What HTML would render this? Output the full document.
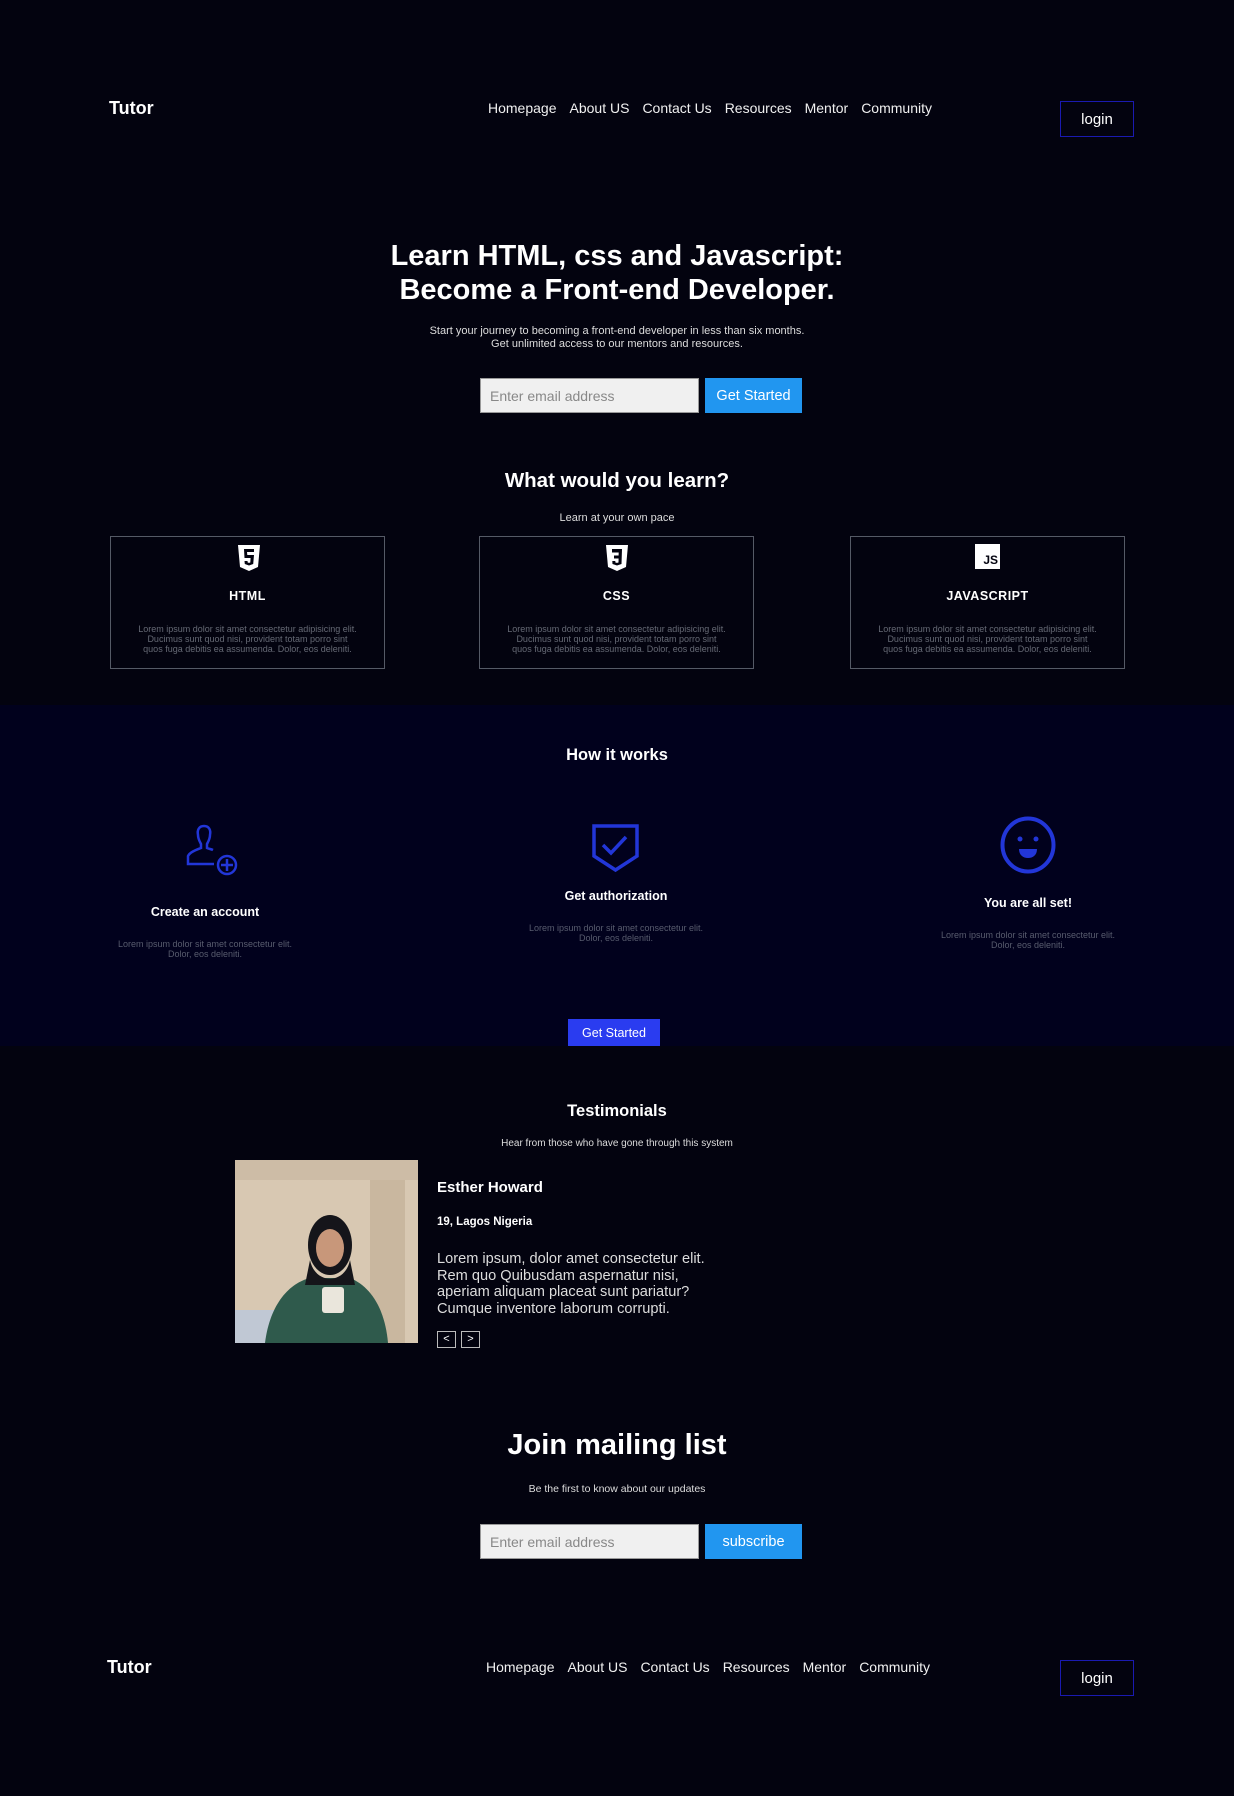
<!DOCTYPE html>
<html><head><meta charset="utf-8"><style>
*{margin:0;padding:0;box-sizing:border-box}
body{width:1234px;height:1796px;background:#03030f;font-family:"Liberation Sans",sans-serif;color:#fff;position:relative;overflow:hidden}
.a{position:absolute}
.c{position:absolute;left:0;width:1234px;text-align:center}
.nav{display:flex;gap:13px;font-size:14px;color:#f0f0f0}
.login{border:1px solid #1a1ab0;width:74px;height:36px;font-size:15px;display:flex;align-items:center;justify-content:center}
.inp{background:#f0f0f0;border:1px solid #999;color:#888;font-size:14px;padding-left:9px;display:flex;align-items:center}
.btn{background:#2196f0;color:#fff;font-size:14.5px;display:flex;align-items:center;justify-content:center}
.card{border:1px solid #555a66;width:275px;height:133px;top:536px;text-align:center}
.card h4{position:absolute;top:52px;width:100%;font-size:12.5px;letter-spacing:.5px}
.card p{position:absolute;top:87px;width:100%;font-size:9px;line-height:10px;color:#666a75}
.step{position:absolute;width:300px;text-align:center}
.step h4{font-size:12.5px}
.step p{font-size:9px;line-height:10px;color:#585c6e}
</style></head><body>
<div class="a" style="left:109px;top:98px;font-size:18px;font-weight:bold">Tutor</div>
<div class="a nav" style="left:488px;top:100px">Homepage<span>About US</span><span>Contact Us</span><span>Resources</span><span>Mentor</span><span>Community</span></div>
<div class="a login" style="left:1060px;top:101px">login</div>

<div class="c" style="top:239px;font-size:29px;font-weight:bold;line-height:34px">Learn HTML, css and Javascript:<br>Become a Front-end Developer.</div>
<div class="c" style="top:325px;font-size:11px;line-height:13px;color:#ddd">Start your journey to becoming a front-end developer in less than six months.<br>Get unlimited access to our mentors and resources.</div>
<div class="a inp" style="left:480px;top:378px;width:219px;height:35px">Enter email address</div>
<div class="a btn" style="left:705px;top:378px;width:97px;height:35px">Get Started</div>

<div class="c" style="top:469px;font-size:20.5px;font-weight:bold">What would you learn?</div>
<div class="c" style="top:512px;font-size:11px;color:#ddd">Learn at your own pace</div>

<div class="a card" style="left:110px"><svg class="a" style="left:127px;top:8px" width="22" height="26" viewBox="0 0 22 26"><path d="M0 0h22l-2 22-9 4-9-4z" fill="#fff"/><path d="M6 4h10v3H9l.3 3H16l-.8 9-4.2 1.5L6.8 19l-.3-3h3l.2 1.5 1.3.4 1.3-.4.3-4.5H6.5z" fill="#03030f"/></svg><h4>HTML</h4><p>Lorem ipsum dolor sit amet consectetur adipisicing elit.<br>Ducimus sunt quod nisi, provident totam porro sint<br>quos fuga debitis ea assumenda. Dolor, eos deleniti.</p></div>
<div class="a card" style="left:479px"><svg class="a" style="left:126px;top:8px" width="22" height="26" viewBox="0 0 22 26"><path d="M0 0h22l-2 22-9 4-9-4z" fill="#fff"/><path d="M6 4h10l-.5 15-4.5 1.5L6.5 19l-.2-3h3l.1 1.5 1.6.4 1.5-.4.1-4H8v-3h4.6l.1-3H6z" fill="#03030f"/></svg><h4>CSS</h4><p>Lorem ipsum dolor sit amet consectetur adipisicing elit.<br>Ducimus sunt quod nisi, provident totam porro sint<br>quos fuga debitis ea assumenda. Dolor, eos deleniti.</p></div>
<div class="a card" style="left:850px"><div class="a" style="left:124px;top:7px;width:25px;height:25px;background:#fff;color:#03030f;font-size:12px;font-weight:bold;text-align:right;padding:9px 2px 0 0;line-height:14px">JS</div><h4>JAVASCRIPT</h4><p>Lorem ipsum dolor sit amet consectetur adipisicing elit.<br>Ducimus sunt quod nisi, provident totam porro sint<br>quos fuga debitis ea assumenda. Dolor, eos deleniti.</p></div>

<div class="a" style="left:0;top:705px;width:1234px;height:341px;background:#01011d"></div>
<div class="c" style="top:746px;font-size:16.5px;font-weight:bold">How it works</div>
<svg class="a" style="left:186px;top:824px" width="54" height="54" viewBox="0 0 54 54" fill="none" stroke="#2236d8" stroke-width="2.5"><path d="M18 2c-5 0-7 4-6 9 0 4 2 7 3 9v4c-5 2-11 4-13 8v8h26"/><path d="M18 2c5 0 7 4 6 9 0 4-2 7-3 9v4c2 1 4 1 6 2"/><circle cx="41" cy="41" r="9"/><path d="M41 35v12M35 41h12"/></svg>
<svg class="a" style="left:591px;top:823px" width="49" height="50" viewBox="0 0 49 50" fill="none" stroke="#2236d8" stroke-width="3.5"><path d="M3 3h43v30L24.5 47 3 33z"/><path d="M12 22l8 8 15-16"/></svg>
<svg class="a" style="left:1000px;top:816px" width="56" height="58" viewBox="0 0 56 58"><ellipse cx="28" cy="29" rx="25.5" ry="26.5" fill="none" stroke="#2236d8" stroke-width="4"/><circle cx="20" cy="23" r="2.5" fill="#2236d8"/><circle cx="36" cy="23" r="2.5" fill="#2236d8"/><path d="M19 33h18c0 6-4 9-9 9s-9-3-9-9z" fill="#2236d8"/></svg>
<div class="step" style="left:55px;top:905px"><h4>Create an account</h4><p style="margin-top:20px">Lorem ipsum dolor sit amet consectetur elit.<br>Dolor, eos deleniti.</p></div>
<div class="step" style="left:466px;top:889px"><h4>Get authorization</h4><p style="margin-top:20px">Lorem ipsum dolor sit amet consectetur elit.<br>Dolor, eos deleniti.</p></div>
<div class="step" style="left:878px;top:896px"><h4>You are all set!</h4><p style="margin-top:20px">Lorem ipsum dolor sit amet consectetur elit.<br>Dolor, eos deleniti.</p></div>
<div class="a" style="left:568px;top:1019px;width:92px;height:27px;background:#2a3cf0;font-size:12.5px;display:flex;align-items:center;justify-content:center">Get Started</div>

<div class="c" style="top:1102px;font-size:16.5px;font-weight:bold">Testimonials</div>
<div class="c" style="top:1138px;font-size:10px;color:#ddd">Hear from those who have gone through this system</div>
<svg class="a" style="left:235px;top:1160px" width="183" height="183" viewBox="0 0 183 183"><rect width="183" height="183" fill="#d8c8b2"/><rect x="0" y="0" width="183" height="20" fill="#cdbca6"/><rect x="135" y="20" width="35" height="163" fill="#c9b79f"/><rect x="0" y="150" width="40" height="33" fill="#c0c8d4"/><path d="M30 183c5-40 25-60 45-65h40c20 8 35 30 38 65z" fill="#2f5a4c"/><ellipse cx="95" cy="85" rx="22" ry="30" fill="#15151a"/><ellipse cx="95" cy="88" rx="14" ry="19" fill="#c8977a"/><path d="M75 100c5 25 35 25 40 0l5 25H70z" fill="#15151a"/><rect x="87" y="127" width="22" height="26" rx="3" fill="#eae6dc"/></svg>
<div class="a" style="left:437px;top:1179px;font-size:15px;font-weight:bold">Esther Howard</div>
<div class="a" style="left:437px;top:1216px;font-size:11.5px;font-weight:bold">19, Lagos Nigeria</div>
<div class="a" style="left:437px;top:1251px;font-size:14.6px;line-height:16.5px;color:#ddd">Lorem ipsum, dolor amet consectetur elit.<br>Rem quo Quibusdam aspernatur nisi,<br>aperiam aliquam placeat sunt pariatur?<br>Cumque inventore laborum corrupti.</div>
<div class="a" style="left:437px;top:1331px;width:19px;height:17px;border:1px solid #bbb;font-size:11px;text-align:center;line-height:15px">&lt;</div>
<div class="a" style="left:461px;top:1331px;width:19px;height:17px;border:1px solid #bbb;font-size:11px;text-align:center;line-height:15px">&gt;</div>

<div class="c" style="top:1429px;font-size:29px;font-weight:bold">Join mailing list</div>
<div class="c" style="top:1483px;font-size:10.5px;color:#ddd">Be the first to know about our updates</div>
<div class="a inp" style="left:480px;top:1524px;width:219px;height:35px">Enter email address</div>
<div class="a btn" style="left:705px;top:1524px;width:97px;height:35px">subscribe</div>

<div class="a" style="left:107px;top:1657px;font-size:18px;font-weight:bold">Tutor</div>
<div class="a nav" style="left:486px;top:1659px">Homepage<span>About US</span><span>Contact Us</span><span>Resources</span><span>Mentor</span><span>Community</span></div>
<div class="a login" style="left:1060px;top:1660px">login</div>
</body></html>
